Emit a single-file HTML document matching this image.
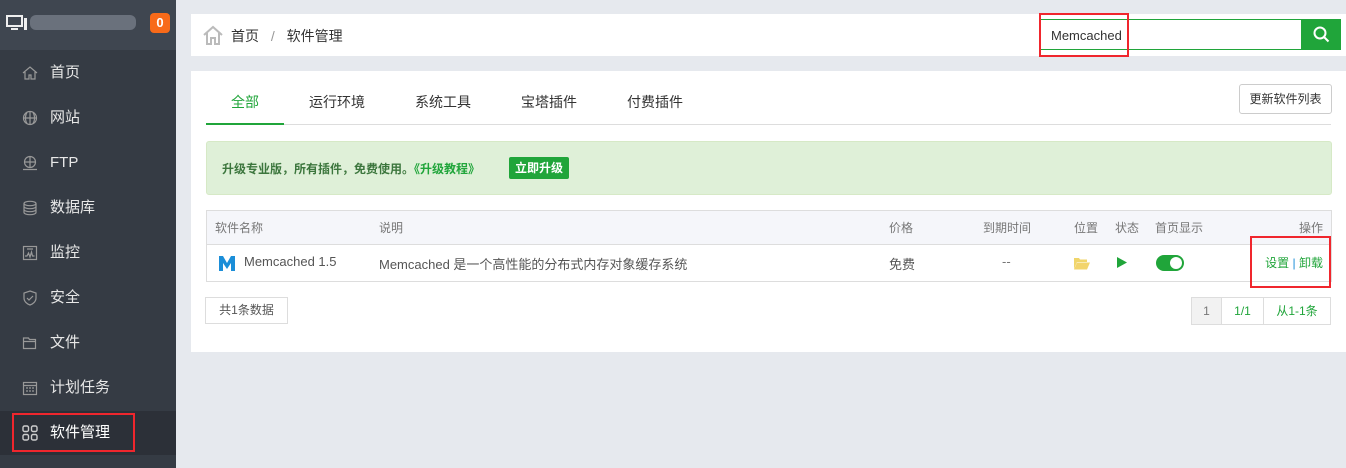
<!DOCTYPE html>
<html><head><meta charset="utf-8"><style>
*{box-sizing:border-box;margin:0;padding:0}
body{width:1346px;height:468px;overflow:hidden;background:#e6e9ee;font-family:"Liberation Sans","Noto Sans CJK SC",sans-serif;font-size:13px;color:#555;position:relative}
.a{position:absolute}
#side{left:0;top:0;width:176px;height:468px;background:#353b44}
#side .hd{left:0;top:0;width:176px;height:50px;background:#3f4650}
.mi{left:0;width:176px;height:44px;color:#e8e8e8;font-size:15px;line-height:44px;padding-left:50px}
.mi svg{position:absolute;left:22px;top:14px}
.card{background:#fff}
.red{border:2px solid #f0262d}
.tab{top:21px;font-size:14px;color:#333}
.hcell{top:219px;color:#777;font-size:12px}
.rcell{top:254px;font-size:13px;color:#555}
</style></head><body>
<div id="side" class="a">
 <div class="hd a">
  <svg class="a" style="left:6px;top:15px" width="22" height="16" viewBox="0 0 22 16"><rect x="1" y="1" width="15" height="10" fill="none" stroke="#eee" stroke-width="2"/><rect x="5" y="13" width="7" height="2" fill="#eee"/><rect x="18" y="3" width="3" height="12" fill="#eee"/></svg>
  <div class="a" style="left:30px;top:15px;width:106px;height:15px;background:#6a717c;border-radius:6px"></div>
  <div class="a" style="left:150px;top:13px;width:20px;height:20px;background:#f86a19;border-radius:4px;color:#fff;font-weight:bold;font-size:13px;text-align:center;line-height:20px">0</div>
 </div>
 <div class="mi a" style="top:51px"><svg width="16" height="16" viewBox="0 0 16 16" fill="none" stroke="#999" stroke-width="1.2"><path d="M1 8L8 2l7 6M3 7v7h4v-4h2v4h4V7"/></svg>首页</div>
 <div class="mi a" style="top:96px"><svg width="16" height="16" viewBox="0 0 16 16" fill="none" stroke="#999" stroke-width="1.2"><circle cx="8" cy="8" r="6.5"/><path d="M1.5 8h13M8 1.5v13M5 2.5c-2 3-2 8 0 11M11 2.5c2 3 2 8 0 11"/></svg>网站</div>
 <div class="mi a" style="top:141px"><svg width="16" height="16" viewBox="0 0 16 16" fill="none" stroke="#999" stroke-width="1.2"><circle cx="8" cy="7" r="5.5"/><path d="M2.5 7h11M8 1.5v11M1 14.5h14"/></svg>FTP</div>
 <div class="mi a" style="top:186px"><svg width="16" height="16" viewBox="0 0 16 16" fill="none" stroke="#999" stroke-width="1.2"><ellipse cx="8" cy="3.5" rx="6" ry="2.2"/><path d="M2 3.5v9c0 1.2 2.7 2.2 6 2.2s6-1 6-2.2v-9M2 6.5c0 1.2 2.7 2.2 6 2.2s6-1 6-2.2M2 9.5c0 1.2 2.7 2.2 6 2.2s6-1 6-2.2"/></svg>数据库</div>
 <div class="mi a" style="top:231px"><svg width="16" height="16" viewBox="0 0 16 16" fill="none" stroke="#999" stroke-width="1.2"><rect x="1.5" y="1.5" width="13" height="13"/><path d="M3 11h2l1.5-3 1.5 4 1.5-5 1 4h2M5 4h6"/></svg>监控</div>
 <div class="mi a" style="top:276px"><svg width="16" height="16" viewBox="0 0 16 16" fill="none" stroke="#999" stroke-width="1.2"><path d="M8 1l6 2v5c0 3.5-3 6-6 7-3-1-6-3.5-6-7V3z"/><path d="M5 8l2 2 4-4"/></svg>安全</div>
 <div class="mi a" style="top:321px"><svg width="16" height="16" viewBox="0 0 16 16" fill="none" stroke="#999" stroke-width="1.2"><path d="M1.5 3h5l1 1.5h6v9h-12zM1.5 6.5h12"/></svg>文件</div>
 <div class="mi a" style="top:366px"><svg width="16" height="16" viewBox="0 0 16 16" fill="none" stroke="#999" stroke-width="1.2"><rect x="1.5" y="2.5" width="13" height="12"/><path d="M1.5 5.5h13M4 8h2M7 8h2M10 8h2M4 11h2M7 11h2M10 11h2"/></svg>计划任务</div>
 <div class="mi a" style="top:411px;background:#2c3038;color:#fff"><svg width="16" height="16" viewBox="0 0 16 16" fill="none" stroke="#ccc" stroke-width="1.4"><rect x="1" y="1" width="5.5" height="5.5" rx="1.5"/><rect x="9.5" y="1" width="5.5" height="5.5" rx="1.5"/><rect x="1" y="9.5" width="5.5" height="5.5" rx="1.5"/><rect x="9.5" y="9.5" width="5.5" height="5.5" rx="1.5"/></svg>软件管理</div>
 <div class="a red" style="left:12px;top:413px;width:123px;height:39px"></div>
</div>

<div class="a card" style="left:191px;top:14px;width:1155px;height:42px">
 <svg class="a" style="left:11px;top:10px" width="22" height="22" viewBox="0 0 22 22" fill="none" stroke="#bbb" stroke-width="2"><path d="M2 11L11 3l9 8M5 9v11h4v-6h4v6h4V9"/></svg>
 <div class="a" style="left:40px;top:12px;font-size:14px;color:#333">首页 <span style="color:#999;margin:0 8px">/</span> 软件管理</div>
 <div class="a" style="left:849px;top:5px;width:262px;height:31px;border:1px solid #20a53a;padding:8px 10px;font-size:13px;color:#333">Memcached</div>
 <div class="a" style="left:1111px;top:5px;width:39px;height:31px;background:#20a53a"><svg class="a" style="left:11px;top:7px" width="17" height="17" viewBox="0 0 17 17" fill="none" stroke="#fff" stroke-width="2"><circle cx="7" cy="7" r="5.5"/><path d="M11 11l4.5 4.5"/></svg></div>
 <div class="a red" style="left:848px;top:-1px;width:90px;height:44px"></div>
</div>

<div class="a card" style="left:191px;top:71px;width:1155px;height:281px">
 <div class="a tab" style="left:40px;color:#20a53a">全部</div>
 <div class="a tab" style="left:118px">运行环境</div>
 <div class="a tab" style="left:224px">系统工具</div>
 <div class="a tab" style="left:330px">宝塔插件</div>
 <div class="a tab" style="left:436px">付费插件</div>
 <div class="a" style="left:15px;top:53px;width:1125px;height:1px;background:#ddd"></div>
 <div class="a" style="left:15px;top:52px;width:78px;height:2px;background:#20a53a"></div>
 <div class="a" style="left:1048px;top:13px;width:93px;height:30px;border:1px solid #ccc;border-radius:3px;font-size:12px;color:#333;text-align:center;line-height:28px">更新软件列表</div>

 <div class="a" style="left:15px;top:70px;width:1126px;height:54px;background:#dff0d8;border:1px solid #d6e9c6;border-radius:3px">
  <div class="a" style="left:15px;top:18px;font-size:12px;color:#3c763d;font-weight:bold">升级专业版，所有插件，免费使用。<span style="color:#20a53a">《升级教程》</span></div>
  <div class="a" style="left:302px;top:15px;width:60px;height:22px;background:#20a53a;color:#fff;font-size:12px;border-radius:2px;text-align:center;line-height:22px;font-weight:bold">立即升级</div>
 </div>

 <div class="a" style="left:15px;top:139px;width:1126px;height:72px;border:1px solid #ddd">
  <div class="a" style="left:0;top:0;width:1124px;height:34px;background:#f5f6fa;border-bottom:1px solid #ddd"></div>
 </div>
</div>
<div class="a hcell" style="left:215px">软件名称</div>
<div class="a hcell" style="left:379px">说明</div>
<div class="a hcell" style="left:889px">价格</div>
<div class="a hcell" style="left:983px">到期时间</div>
<div class="a hcell" style="left:1074px">位置</div>
<div class="a hcell" style="left:1115px">状态</div>
<div class="a hcell" style="left:1155px">首页显示</div>
<div class="a hcell" style="left:1299px">操作</div>
<svg class="a" style="left:218px;top:254px" width="18" height="18" viewBox="0 0 18 18"><path d="M1 17V2h4l4 7 4-7h4v15h-4V9l-4 6-4-6v8z" fill="#1b8ed8"/></svg>
<div class="a rcell" style="left:244px">Memcached 1.5</div>
<div class="a rcell" style="left:379px">Memcached 是一个高性能的分布式内存对象缓存系统</div>
<div class="a rcell" style="left:889px">免费</div>
<div class="a rcell" style="left:1002px;color:#777">--</div>
<svg class="a" style="left:1074px;top:257px" width="16" height="13" viewBox="0 0 16 13"><path d="M0 1h5l1 1.5h7V5H3L0 12z" fill="#f0d56a"/><path d="M3 5.5h13L13 12.5H0z" fill="#f2d46c"/></svg>
<svg class="a" style="left:1117px;top:257px" width="10" height="11" viewBox="0 0 10 11"><path d="M0 0l10 5.5L0 11z" fill="#20a53a"/></svg>
<div class="a" style="left:1156px;top:255px;width:28px;height:16px;background:#20a53a;border-radius:8px"><div class="a" style="left:14px;top:2px;width:12px;height:12px;border-radius:6px;background:#fff"></div></div>
<div class="a rcell" style="left:1220px;width:103px;text-align:right;font-size:12px;color:#20a53a">设置<span style="color:#1b8ed8"> | </span>卸载</div>
<div class="a red" style="left:1250px;top:236px;width:81px;height:52px"></div>

<div class="a" style="left:205px;top:297px;width:83px;height:27px;border:1px solid #ddd;background:#fff;font-size:12px;color:#555;text-align:center;line-height:25px">共1条数据</div>
<div class="a" style="left:1191px;top:297px;width:140px;height:28px;border:1px solid #ddd;background:#fff;font-size:12px;line-height:26px">
 <div class="a" style="left:0;top:0;width:30px;height:26px;background:#f2f2f2;color:#777;text-align:center;border-right:1px solid #ddd">1</div>
 <div class="a" style="left:30px;top:0;width:42px;height:26px;color:#20a53a;text-align:center;border-right:1px solid #ddd">1/1</div>
 <div class="a" style="left:72px;top:0;width:66px;height:26px;color:#20a53a;text-align:center">从1-1条</div>
</div>
</body></html>
